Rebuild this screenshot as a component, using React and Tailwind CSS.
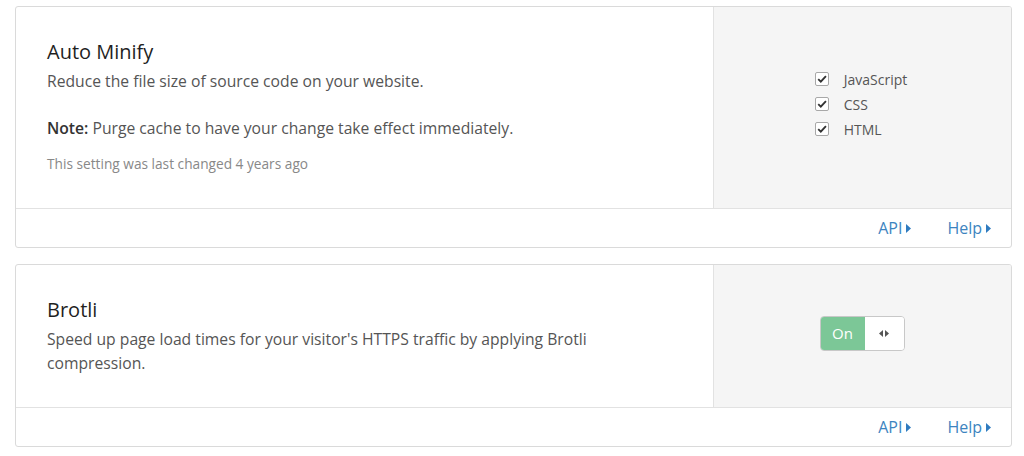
import React from 'react';

const font = { fontFamily: '"Open Sans", "Noto Sans", Arial, sans-serif' };

function Check({ label }) {
  return (
    <div className="flex items-center h-[25px]">
      <span className="w-[14px] h-[14px] border border-[#a8a8a8] rounded-[2px] bg-white flex items-center justify-center">
        <svg viewBox="0 0 14 14" className="w-[14px] h-[14px]">
          <path d="M2.6 7.2 L5.6 10.1 L11.6 3.6" fill="none" stroke="#333" strokeWidth="2.2" />
        </svg>
      </span>
      <span className="ml-[15px] text-[14px] text-[#555]">{label}</span>
    </div>
  );
}

function Caret() {
  return (
    <svg viewBox="0 0 5 9" className="w-[5px] h-[9px] ml-[4px] inline-block">
      <path d="M0 0 L5 4.5 L0 9 Z" fill="#2f7bbf" />
    </svg>
  );
}

function Footer() {
  return (
    <div className="h-[39px] border-t border-[#e2e2e2] flex items-center justify-end pr-[20px] gap-[36px] text-[16px] text-[#3d84c0]">
      <span className="flex items-center">API<Caret /></span>
      <span className="flex items-center">Help<Caret /></span>
    </div>
  );
}

function Card({ left, right, height }) {
  return (
    <div className="border border-[#dadada] rounded-[3px] bg-white overflow-hidden">
      <div className={`flex ${height}`}>
        <div className="flex-1 pl-[31px] pt-[31px]">{left}</div>
        <div className="w-[298px] bg-[#f5f5f5] border-l border-[#e2e2e2] flex items-center justify-center">{right}</div>
      </div>
      <Footer />
    </div>
  );
}

export default function App() {
  return (
    <div className="w-[1024px] h-[456px] bg-white pl-[15px] pr-[12px] pt-[6px] flex flex-col gap-[16px] text-[#444]" style={font}>
      <Card
        height="h-[201px]"
        left={
          <div>
            <h2 className="text-[20px] leading-[28px] text-[#1f1f1f]">Auto Minify</h2>
            <p className="text-[15.7px] leading-[24px] mt-[3px] text-[#555]">Reduce the file size of source code on your website.</p>
            <p className="text-[15.7px] leading-[24px] mt-[23px] text-[#555]"><span className="font-semibold text-[#333]">Note:</span> Purge cache to have your change take effect immediately.</p>
            <p className="text-[13.7px] leading-[20px] mt-[14px] text-[#888]">This setting was last changed 4 years ago</p>
          </div>
        }
        right={
          <div className="flex flex-col -ml-[3px] -mt-[7px]">
            <Check label="JavaScript" />
            <Check label="CSS" />
            <Check label="HTML" />
          </div>
        }
      />
      <Card
        height="h-[142px]"
        left={
          <div>
            <h2 className="text-[20px] leading-[28px] text-[#1f1f1f]">Brotli</h2>
            <p className="text-[15.7px] leading-[24px] mt-[3px] text-[#555] w-[580px]">Speed up page load times for your visitor's HTTPS traffic by applying Brotli compression.</p>
          </div>
        }
        right={
          <div className="flex h-[35px] w-[85px] rounded-[4px] border border-[#c8c8c8] overflow-hidden -mt-[5px] ml-[-1px]">
            <div className="w-[44px] bg-[#7cc797] flex items-center justify-center text-white text-[15px]">On</div>
            <div className="flex-1 bg-white flex items-center justify-center gap-[2px]">
              <svg viewBox="0 0 4 7" className="w-[4px] h-[7px]"><path d="M4 0 L0 3.5 L4 7 Z" fill="#555" /></svg>
              <svg viewBox="0 0 4 7" className="w-[4px] h-[7px]"><path d="M0 0 L4 3.5 L0 7 Z" fill="#555" /></svg>
            </div>
          </div>
        }
      />
    </div>
  );
}
